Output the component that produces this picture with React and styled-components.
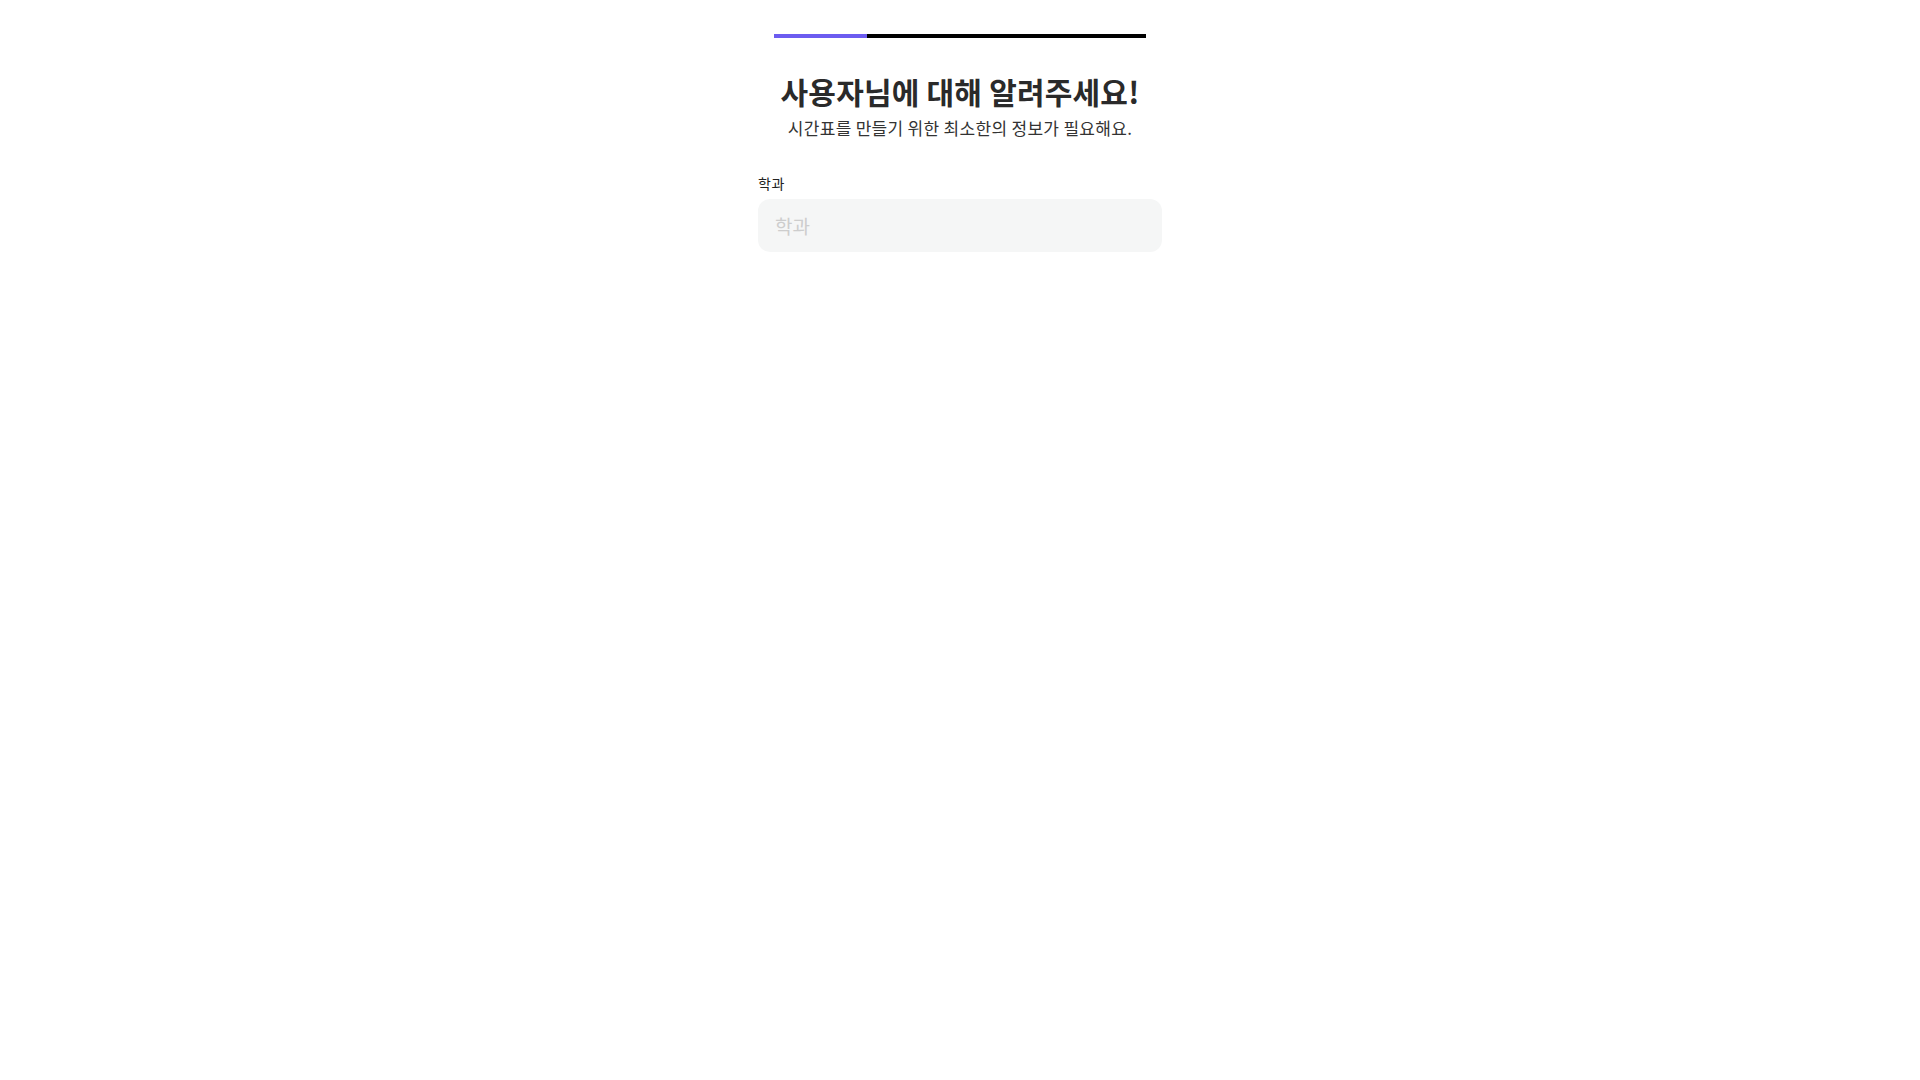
import React from 'react';
import styled, { createGlobalStyle } from 'styled-components';

const GlobalStyle = createGlobalStyle`
  * { box-sizing: border-box; }
  body {
    margin: 0;
    background: #fff;
    font-family: "Noto Sans CJK KR", "Noto Sans", sans-serif;
    color: #222;
  }
`;

const App = () => {
  const step = 1;
  const total = 4;

  return (
    <>
      <GlobalStyle />
      <Page>
        <Container>
          <ProgressTrack>
            <ProgressFill style={{ width: `${(step / total) * 100}%` }} />
          </ProgressTrack>
          <Header>
            <Title>사용자님에 대해 알려주세요!</Title>
            <SubTitle>시간표를 만들기 위한 최소한의 정보가 필요해요.</SubTitle>
          </Header>
          <Field>
            <Label htmlFor="major">학과</Label>
            <Input id="major" placeholder="학과" />
          </Field>
        </Container>
      </Page>
    </>
  );
};

const Page = styled.div`
  display: flex;
  justify-content: center;
  min-height: 100vh;
`;

const Container = styled.div`
  display: flex;
  flex-direction: column;
  width: 404px;
  padding-top: 34px;
`;

const ProgressTrack = styled.div`
  display: flex;
  margin: 0 16px;
  height: 4px;
  background: #000;
`;

const ProgressFill = styled.div`
  height: 100%;
  background: #6c5cf0;
`;

const Header = styled.div`
  display: flex;
  flex-direction: column;
  align-items: center;
  margin-top: 34px;
`;

const Title = styled.h1`
  margin: 0;
  font-size: 30px;
  font-weight: 700;
  line-height: 1.3;
  letter-spacing: 0.2px;
  color: #2a2a2a;
`;

const SubTitle = styled.p`
  margin: 4px 0 0;
  font-size: 17px;
  line-height: 1.5;
  letter-spacing: 0.3px;
  color: #333;
`;

const Field = styled.div`
  display: flex;
  flex-direction: column;
  margin-top: 33px;
`;

const Label = styled.label`
  font-size: 14px;
  line-height: 1.4;
  letter-spacing: 0.5px;
  color: #222;
  margin-bottom: 6px;
`;

const Input = styled.input`
  height: 53px;
  padding: 0 17px;
  border: none;
  border-radius: 12px;
  background: #f5f6f6;
  font-family: inherit;
  font-size: 19px;
  color: #222;
  outline: none;

  &::placeholder {
    color: #cdcdcd;
  }
`;

export default App;
